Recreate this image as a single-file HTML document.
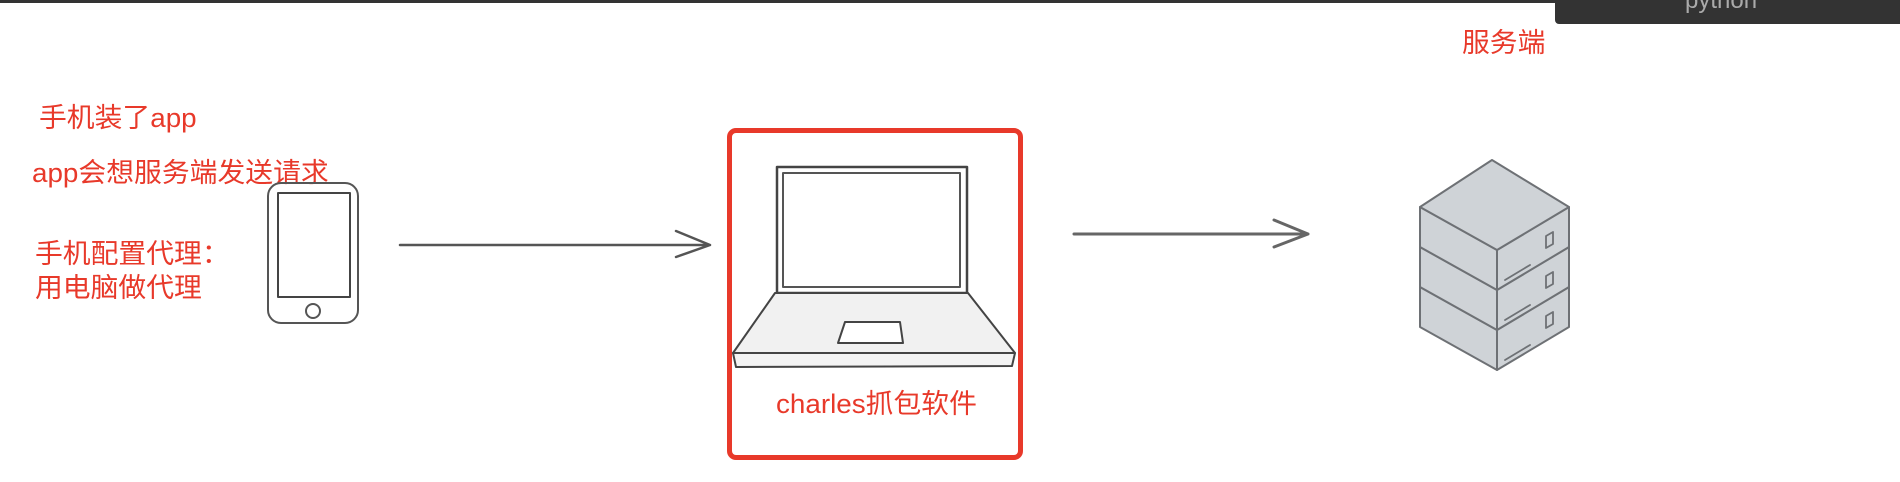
<!DOCTYPE html>
<html><head><meta charset="utf-8"><style>
html,body{margin:0;padding:0;width:1900px;height:482px;overflow:hidden;background:#fff;position:relative;font-family:"Liberation Sans","Noto Sans CJK SC",sans-serif}
.t{position:absolute;color:#e8392a;font-size:27px;line-height:27px;white-space:nowrap;transform-origin:0 0;transform:scaleX(1.03)}
</style></head><body>
<div style="position:absolute;left:0;top:0;width:1900px;height:3px;background:#333"></div>
<div style="position:absolute;left:1555px;top:0;width:345px;height:24px;background:#333;border-bottom-left-radius:4px;overflow:hidden">
<div style="position:absolute;left:130px;top:-13px;color:#aaa;font-size:24px">python</div></div>
<div class="t" style="left:1462px;top:30px">服务端</div>
<div class="t" style="left:39px;top:105px">手机装了app</div>
<div class="t" style="left:32px;top:160px">app会想服务端发送请求</div>
<div class="t" style="left:35px;top:241px">手机配置代理：</div>
<div class="t" style="left:35px;top:275px">用电脑做代理</div>
<div class="t" style="left:776px;top:391px">charles抓包软件</div>
<div style="position:absolute;left:727px;top:128px;width:286px;height:322px;border:5px solid #e8392a;border-radius:9px"></div>
<svg width="1900" height="482" style="position:absolute;left:0;top:0" fill="none" stroke-linejoin="round" stroke-linecap="round">
<rect x="268" y="183" width="90" height="140" rx="13" stroke="#555" stroke-width="2"/>
<rect x="278" y="193" width="72" height="104" stroke="#444" stroke-width="2"/>
<circle cx="313" cy="311" r="7" stroke="#555" stroke-width="2"/>
<path d="M400 245 L710 245 M676 231 L710 245 L676 257" stroke="#555" stroke-width="2.5"/>
<rect x="777" y="167" width="190" height="126" stroke="#444" stroke-width="2.5"/>
<rect x="783" y="173" width="177" height="114" stroke="#555" stroke-width="2"/>
<path d="M775 293 L968 293 L1015 353 L733 353 Z" fill="#f1f1f1" stroke="#444" stroke-width="2"/>
<path d="M733 353 L1015 353 L1012 366 L736 367 Z" fill="#f3f3f3" stroke="#444" stroke-width="2"/>
<path d="M845 322 L900 322 L903 343 L838 343 Z" fill="#fff" stroke="#444" stroke-width="2"/>
<path d="M1074 234 L1308 234 M1274 220 L1308 234 L1274 247" stroke="#666" stroke-width="3"/>
<g fill="#cfd3d7" stroke="#6e7175" stroke-width="2">
<path d="M1420 287 L1497 330 L1569 287 L1569 327 L1497 370 L1420 327 Z"/>
<path d="M1420 247 L1497 290 L1569 247 L1569 287 L1497 330 L1420 287 Z"/>
<path d="M1420 207 L1497 250 L1569 207 L1569 247 L1497 290 L1420 247 Z"/>
<path d="M1492 160 L1569 207 L1497 250 L1420 207 Z"/>
<path d="M1497 250 L1497 370" fill="none"/>
</g>
<g stroke="#6e7175" stroke-width="1.8">
<path d="M1505 280 L1530 265 M1505 320 L1530 305 M1505 360 L1530 345"/>
<path d="M1546 236 L1553 232 L1553 244 L1546 248 Z M1546 276 L1553 272 L1553 284 L1546 288 Z M1546 316 L1553 312 L1553 324 L1546 328 Z"/>
</g>
</svg>
</body></html>
